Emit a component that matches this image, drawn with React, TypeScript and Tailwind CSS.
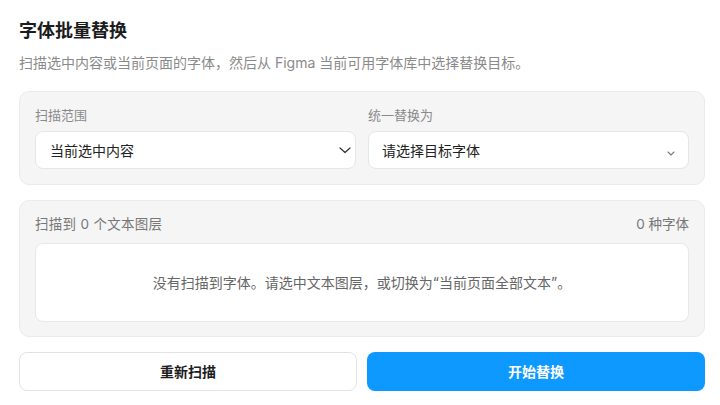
import React from "react";

const font = { fontFamily: 'Inter, "Noto Sans CJK SC", sans-serif' };

function Chevron({ small }: { small?: boolean }) {
  if (small) {
    return (
      <svg width="8" height="5" viewBox="0 0 8 5" fill="none" className="shrink-0">
        <path d="M1 1L4 4L7 1" stroke="#7a7a7a" strokeWidth="1.1" strokeLinecap="round" strokeLinejoin="round" />
      </svg>
    );
  }
  return (
    <svg width="12" height="7" viewBox="0 0 12 7" fill="none" className="shrink-0">
      <path d="M1 1L6 5.5L11 1" stroke="#333" strokeWidth="1.2" strokeLinecap="round" strokeLinejoin="round" />
    </svg>
  );
}

export default function App() {
  return (
    <div className="w-[720px] h-[405px] bg-white overflow-hidden" style={font}>
      <div className="ml-[19px] w-[686px] pt-[18px]">
        <h1 className="text-[18px] leading-[26px] font-bold text-[#1c1c1c]">字体批量替换</h1>
        <p className="mt-[9px] text-[14px] leading-[20px] text-[#8a8a8a]">
          扫描选中内容或当前页面的字体，然后从 Figma 当前可用字体库中选择替换目标。
        </p>

        <div className="mt-[18px] rounded-[10px] border border-[#ebebeb] bg-[#f5f5f5] px-[15px] pt-[14px] pb-[15px]">
          <div className="grid grid-cols-2 gap-[12px]">
            <div>
              <div className="text-[13px] leading-[18px] text-[#8a8a8a]">扫描范围</div>
              <div className="mt-[7px] flex h-[38px] items-center justify-between rounded-[8px] border border-[#e6e6e6] bg-white pl-[14px] pr-[4px]">
                <span className="text-[14px] text-[#222]">当前选中内容</span>
                <Chevron />
              </div>
            </div>
            <div>
              <div className="text-[13px] leading-[18px] text-[#8a8a8a]">统一替换为</div>
              <div className="mt-[7px] flex h-[38px] items-center justify-between rounded-[8px] border border-[#e6e6e6] bg-white pl-[13px] pr-[13px]">
                <span className="text-[14px] text-[#222]">请选择目标字体</span>
                <span className="mt-[6px]"><Chevron small /></span>
              </div>
            </div>
          </div>
        </div>

        <div className="mt-[15px] rounded-[10px] border border-[#ebebeb] bg-[#f5f5f5] px-[15px] pt-[14px] pb-[14px]">
          <div className="flex items-center justify-between text-[13.5px] leading-[18px] text-[#777]">
            <span className="tracking-[0.3px]">扫描到 0 个文本图层</span>
            <span>0 种字体</span>
          </div>
          <div className="mt-[10px] flex h-[79px] items-center justify-center rounded-[8px] border border-[#e8e8e8] bg-white">
            <span className="text-[14px] text-[#666]">没有扫描到字体。请选中文本图层，或切换为“当前页面全部文本”。</span>
          </div>
        </div>

        <div className="mt-[15px] grid grid-cols-2 gap-[10px]">
          <button className="h-[39px] rounded-[8px] border border-[#e3e3e3] bg-white text-[14px] font-bold text-[#1c1c1c]">
            重新扫描
          </button>
          <button className="h-[39px] rounded-[8px] bg-[#0d99ff] text-[14px] font-bold text-white">
            开始替换
          </button>
        </div>
      </div>
    </div>
  );
}
